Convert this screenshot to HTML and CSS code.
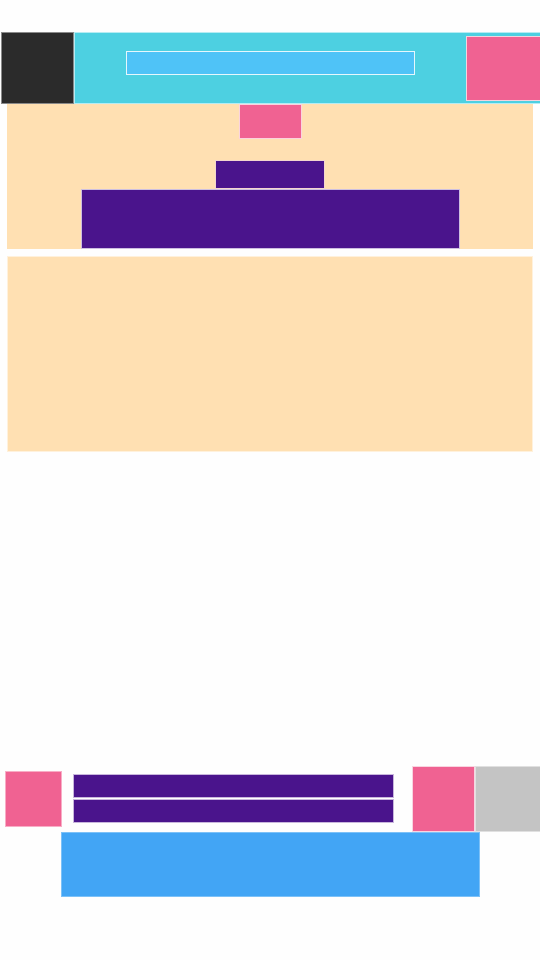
FILE: index.html
```html
<!doctype html>
<html>
  <head>
    <meta charset="UTF-8">
    <title>Layout</title>
    <link rel="stylesheet" href="styles.css">
  </head>
  <body>
    <header class="topbar">
      <div class="logo"></div>
      <div class="bar">
        <div class="search"></div>
        <div class="avatar"></div>
      </div>
    </header>

    <main class="content">
      <section class="hero">
        <div class="hero-badge"></div>
        <div class="hero-title"></div>
        <div class="hero-banner"></div>
      </section>
      <section class="panel"></section>
    </main>

    <footer class="footer">
      <div class="footer-row">
        <div class="footer-icon"></div>
        <div class="footer-lines">
          <div class="line"></div>
          <div class="line"></div>
        </div>
        <div class="footer-action"></div>
        <div class="footer-extra"></div>
      </div>
      <div class="footer-button"></div>
    </footer>
  </body>
</html>
```

FILE: styles.css
```css
* {
    box-sizing: border-box;
}

body {
    margin: 0;
    font-family: "Liberation Sans", Arial, sans-serif;
    background: #fefefe;
}

.topbar {
    display: flex;
    margin-top: 32px;
    height: 72px;
    padding-left: 1px;
}

.logo {
    width: 73px;
    background: #2b2b2b;
    border: 1px solid #8a8a8a;
}

.bar {
    flex-grow: 1;
    display: flex;
    align-items: flex-start;
    padding-left: 51px;
    background: #4dd0e1;
    border: 1px solid #b5ecf3;
    border-right: none;
}

.search {
    width: 289px;
    height: 24px;
    margin-top: 18px;
    background: #4fc3f7;
    border: 1px solid #e6f7fd;
}

.avatar {
    margin-left: auto;
    margin-top: 3px;
    width: 74px;
    height: 65px;
    background: #f06292;
    border: 1px solid #f4d3de;
    border-right: none;
}

.content {
    padding: 0 7px;
}

.hero {
    display: flex;
    flex-direction: column;
    align-items: center;
    height: 145px;
    background: #ffe0b2;
}

.hero-badge {
    width: 63px;
    height: 35px;
    background: #f06292;
    border: 1px solid #fbd3dd;
}

.hero-title {
    width: 110px;
    height: 29px;
    margin-top: 21px;
    background: #4a148c;
    border: 1px solid #f3d6ce;
}

.hero-banner {
    width: 379px;
    height: 60px;
    background: #4a148c;
    border: 1px solid #cdbfe0;
}

.panel {
    margin-top: 7px;
    height: 196px;
    background: #ffe0b2;
    border: 1px solid #fff1dc;
}

.footer {
    margin-top: 314px;
}

.footer-row {
    display: flex;
    align-items: flex-start;
    height: 66px;
}

.footer-icon {
    width: 57px;
    height: 56px;
    margin: 5px 0 0 5px;
    background: #f06292;
    border: 1px solid #f8adc6;
}

.footer-lines {
    width: 321px;
    margin: 8px 0 0 11px;
}

.line {
    height: 24px;
    background: #4a148c;
    border: 1px solid #c8b6dc;
}

.line + .line {
    margin-top: 1px;
}

.footer-action {
    width: 63px;
    height: 66px;
    margin-left: 18px;
    background: #f06292;
    border: 1px solid #f8d5e0;
}

.footer-extra {
    flex-grow: 1;
    height: 66px;
    background: #c4c4c4;
    border: 1px solid #e0e0e0;
    border-right: none;
}

.footer-button {
    width: 419px;
    height: 65px;
    margin-left: 61px;
    background: #42a5f5;
    border: 1px solid #7cc1f8;
}
```
